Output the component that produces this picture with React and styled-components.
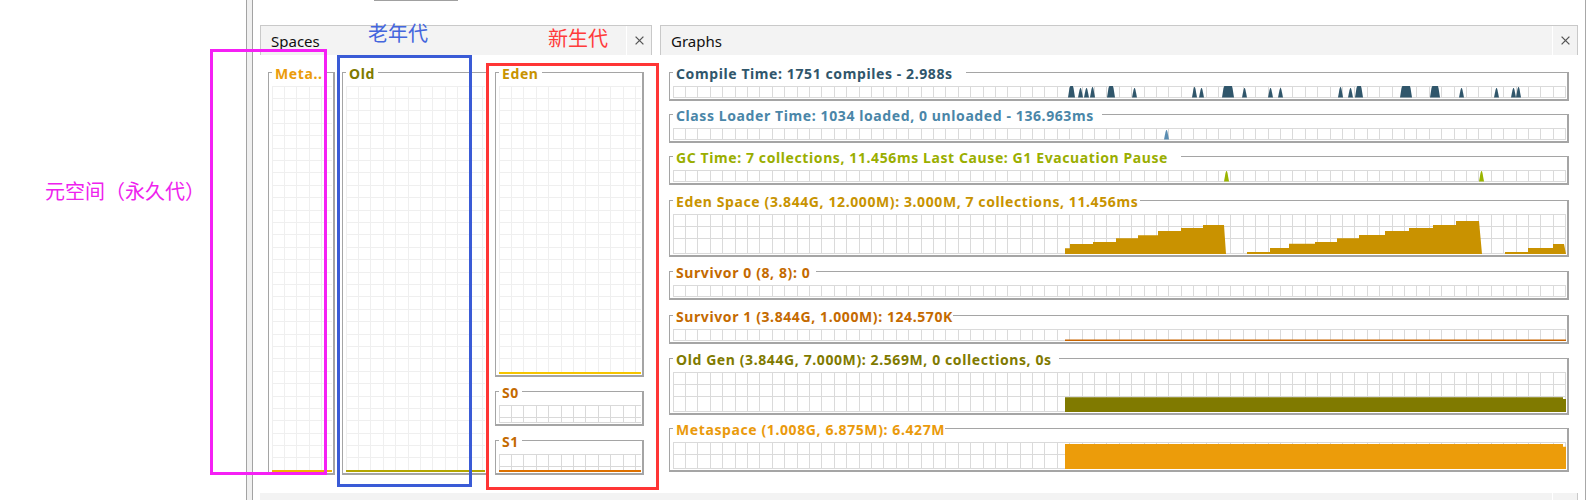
import React from "react";
import styled, { createGlobalStyle } from "styled-components";

const STEP = 12.4;

const GlobalStyle = createGlobalStyle`
  html, body {
    margin: 0;
    padding: 0;
    background: #fff;
  }
  body {
    width: 1590px;
    height: 500px;
    overflow: hidden;
    font-family: "Noto Sans", "Liberation Sans", sans-serif;
  }
`;

const Page = styled.div`
  position: relative;
  display: flex;
  width: 1590px;
  height: 500px;
  overflow: hidden;
  background: #fff;
`;

const Gutter = styled.div`
  flex: none;
  width: 246px;
`;

const Splitter = styled.div`
  flex: none;
  width: 5px;
  border-left: 1px solid #a3a3a3;
  border-right: 1px solid #a3a3a3;
  background: #f0f0f0;
`;

const Main = styled.div`
  flex: none;
  width: 1318px;
  padding: 0 7px;
  border-right: 1px solid #a8a8a8;
  display: flex;
  flex-direction: column;
`;

const TopStub = styled.div`
  flex: none;
  width: 84px;
  height: 1px;
  margin-left: 114px;
  background: #a0a0a0;
`;

const Panels = styled.div`
  flex: none;
  display: flex;
  gap: 8px;
  height: 468px;
  margin-top: 24px;
`;

const Panel = styled.section`
  flex: none;
  width: ${(p) => p.$w}px;
  display: flex;
  flex-direction: column;
`;

const Header = styled.header`
  flex: none;
  box-sizing: border-box;
  height: 30px;
  display: flex;
  background: #f3f3f3;
  border: 1px solid #c9c9c9;
  border-bottom: none;
`;

const TabLabel = styled.div`
  flex: 1;
  display: flex;
  align-items: center;
  padding-left: 10px;
  font-size: 15px;
  color: #111;
`;

const CloseCell = styled.div`
  flex: none;
  width: 24px;
  border-left: 1px solid #fff;
  display: flex;
  align-items: center;
  justify-content: center;
`;

const Body = styled.div`
  flex: 1;
  padding: 17px ${(p) => p.$px}px 0;
`;

const SpaceRow = styled.div`
  display: grid;
  grid-template-columns: 67px 146px 149px;
  column-gap: 7px;
  align-items: start;
`;

const YoungCol = styled.div`
  display: flex;
  flex-direction: column;
  gap: 14px;
`;

const GraphList = styled.div`
  display: flex;
  flex-direction: column;
`;

const Frame = styled.div`
  box-sizing: border-box;
  display: flex;
  flex-direction: column;
  margin-top: ${(p) => p.$space || 0}px;
  border-style: solid;
  border-color: #a5a5a5;
  border-width: 1px 2px 2px 1px;
  padding: 0 1px 1px 3px;
`;

const Legend = styled.div`
  align-self: flex-start;
  height: 16px;
  margin-top: -7px;
  padding: 0 ${(p) => p.$gap}px 0 3px;
  background: #fff;
  font-size: 14px;
  font-weight: 700;
  line-height: 16px;
  letter-spacing: 0.6px;
  white-space: nowrap;
  color: ${(p) => p.$color};
`;

const PlotSvg = styled.svg`
  display: block;
  flex: none;
  margin-top: 4px;
`;

const BottomBar = styled.div`
  flex: 1;
  display: flex;
  justify-content: flex-end;
  background: #f3f3f3;
  border-right: 1px solid #c9c9c9;
`;

const BarCell = styled.div`
  width: 24px;
  border-left: 1px solid #fff;
`;

const Outline = styled.div`
  position: absolute;
  left: ${(p) => p.$x}px;
  top: ${(p) => p.$y}px;
  width: ${(p) => p.$w}px;
  height: ${(p) => p.$h}px;
  box-sizing: border-box;
  border: 3px solid ${(p) => p.$c};
  pointer-events: none;
`;

const Note = styled.div`
  position: absolute;
  left: ${(p) => p.$x}px;
  top: ${(p) => p.$y}px;
  font-family: "Noto Sans CJK SC", "Noto Sans", sans-serif;
  font-size: 20px;
  line-height: 20px;
  white-space: nowrap;
  color: ${(p) => p.$c};
`;

function CloseIcon() {
  return (
    <svg width="9" height="9" viewBox="0 0 9 9">
      <path d="M0.6 0.6L8.4 8.4M8.4 0.6L0.6 8.4" stroke="#555" strokeWidth="1.3" />
    </svg>
  );
}

function Plot({ w, h, grid = "#dadada", children }) {
  const xs = [];
  for (let x = 0; x < w; x += STEP) xs.push(Math.floor(x) + 0.5);
  const ys = [];
  for (let y = 0; y < h - 3; y += STEP) ys.push(Math.floor(y) + 0.5);
  ys.push(h - 0.5);
  return (
    <PlotSvg width={w} height={h}>
      <g shapeRendering="crispEdges" stroke={grid} strokeWidth="1">
        {xs.map((x) => (
          <line key={"v" + x} x1={x} x2={x} y1={0} y2={h} />
        ))}
        {ys.map((y) => (
          <line key={"h" + y} x1={0} x2={w} y1={y} y2={y} />
        ))}
      </g>
      {children}
    </PlotSvg>
  );
}

function Titled({ title, color, gap = 3, space, children }) {
  return (
    <Frame $space={space}>
      <Legend $color={color} $gap={gap}>
        {title}
      </Legend>
      {children}
    </Frame>
  );
}

// spikes: [left, right, top] in plot coordinates
const spikePath = ([a, b, t], bottom) => {
  const l = a + 1.5;
  const r = Math.max(b - 1.5, l + 1);
  return `M${a},${bottom}L${l},${t + 2}L${l + 0.8},${t}L${r - 0.6},${t}L${r},${t + 2}L${b},${bottom}Z`;
};

// steps: [[x, y], ...] drawn as a staircase area
const stepPath = (steps, end, drop, bottom) => {
  let d = `M${steps[0][0]},${bottom}`;
  let prev = bottom;
  steps.forEach(([x, y]) => {
    d += `L${x},${prev}L${x},${y}`;
    prev = y;
  });
  return d + `L${end},${prev}L${drop},${bottom}Z`;
};

const compileSpikes = [
  [395, 402, 0], [405, 410, 2], [411, 416, 2], [417, 422, 1], [434, 442, 0],
  [459, 464, 2], [519, 524, 1], [526, 531, 2], [549, 561, 0], [569, 574, 2],
  [595, 600, 2], [605, 610, 2], [665, 670, 1], [675, 680, 2], [682, 690, 0],
  [727, 739, 0], [757, 767, 0], [786, 791, 2], [821, 826, 2], [838, 843, 2],
  [843, 848, 1],
];

const edenRuns = [
  {
    steps: [[392, 34.3], [397, 30], [420, 28], [443, 24.3], [465, 21.3], [485, 17], [508, 14], [530, 11]],
    end: 551,
    drop: 553,
  },
  {
    steps: [[574, 38], [597, 34], [616, 29.7], [642, 28], [664, 24.3], [686, 21], [712, 17], [736, 14], [760, 11], [783, 7]],
    end: 806,
    drop: 809,
  },
  { steps: [[832, 38], [855, 34], [880, 30]], end: 891, drop: 893 },
];

const GW = 893;

export default function App() {
  return (
    <>
      <GlobalStyle />
      <Page>
        <Gutter />
        <Splitter />
        <Main>
          <TopStub />
          <Panels>
            <Panel $w={392}>
              <Header>
                <TabLabel>Spaces</TabLabel>
                <CloseCell>
                  <CloseIcon />
                </CloseCell>
              </Header>
              <Body $px={8}>
                <SpaceRow>
                  <Titled title="Meta.." color="#eb9c0a">
                    <Plot w={60} h={386} grid="#efefef">
                      <rect x="0" y="384" width="60" height="2" fill="#efb400" />
                    </Plot>
                  </Titled>
                  <Titled title="Old" color="#7f7a00">
                    <Plot w={139} h={386} grid="#efefef">
                      <rect x="0" y="384" width="139" height="2" fill="#b4a600" />
                    </Plot>
                  </Titled>
                  <YoungCol>
                    <Titled title="Eden" color="#c89300">
                      <Plot w={142} h={288} grid="#efefef">
                        <rect x="0" y="286" width="142" height="2" fill="#f6c500" />
                      </Plot>
                    </Titled>
                    <Titled title="S0" color="#c46a00">
                      <Plot w={142} h={18} grid="#d9d9d9" />
                    </Titled>
                    <Titled title="S1" color="#c46a00">
                      <Plot w={142} h={18} grid="#d9d9d9">
                        <rect x="0" y="16" width="142" height="2" fill="#dd7000" />
                      </Plot>
                    </Titled>
                  </YoungCol>
                </SpaceRow>
              </Body>
            </Panel>

            <Panel $w={918}>
              <Header>
                <TabLabel>Graphs</TabLabel>
                <CloseCell>
                  <CloseIcon />
                </CloseCell>
              </Header>
              <Body $px={9}>
                <GraphList>
                  <Titled title="Compile Time: 1751 compiles - 2.988s" color="#30566b" gap={13}>
                    <Plot w={GW} h={12}>
                      {compileSpikes.map((s) => (
                        <path key={s[0]} d={spikePath(s, 11.5)} fill="#30566b" />
                      ))}
                    </Plot>
                  </Titled>
                  <Titled title="Class Loader Time: 1034 loaded, 0 unloaded - 136.963ms" color="#4a86a8" gap={8} space={13}>
                    <Plot w={GW} h={12}>
                      <path d={spikePath([491, 496, 2], 11.5)} fill="#5a8db2" />
                    </Plot>
                  </Titled>
                  <Titled title="GC Time: 7 collections, 11.456ms Last Cause: G1 Evacuation Pause" color="#9aae00" gap={13} space={13}>
                    <Plot w={GW} h={12}>
                      <path d={spikePath([551, 556, 1], 11.5)} fill="#9ab400" />
                      <path d={spikePath([806, 811, 1], 11.5)} fill="#9ab400" />
                    </Plot>
                  </Titled>
                  <Titled title="Eden Space (3.844G, 12.000M): 3.000M, 7 collections, 11.456ms" color="#c89300" gap={2} space={15}>
                    <Plot w={GW} h={40}>
                      {edenRuns.map((r) => (
                        <path key={r.end} d={stepPath(r.steps, r.end, r.drop, 40)} fill="#c99200" />
                      ))}
                    </Plot>
                  </Titled>
                  <Titled title="Survivor 0 (8, 8): 0" color="#c46a00" gap={6} space={14}>
                    <Plot w={GW} h={12} />
                  </Titled>
                  <Titled title="Survivor 1 (3.844G, 1.000M): 124.570K" color="#c46a00" gap={0} space={15}>
                    <Plot w={GW} h={12}>
                      <rect x="392" y="10.5" width="501" height="1.5" fill="#c86400" />
                    </Plot>
                  </Titled>
                  <Titled title="Old Gen (3.844G, 7.000M): 2.569M, 0 collections, 0s" color="#7f7a00" gap={7} space={14}>
                    <Plot w={GW} h={40}>
                      <path d="M392,40V25.3H890V27H893V40Z" fill="#807a00" />
                    </Plot>
                  </Titled>
                  <Titled title="Metaspace (1.008G, 6.875M): 6.427M" color="#ea9a0c" gap={0} space={13}>
                    <Plot w={GW} h={27}>
                      <path d="M392,27V2H890V4.7H893V27Z" fill="#ec9c0a" />
                    </Plot>
                  </Titled>
                </GraphList>
              </Body>
            </Panel>
          </Panels>
          <BottomBar>
            <BarCell />
          </BottomBar>
        </Main>

        <Outline $x={210} $y={49} $w={117} $h={426} $c="#f520f5" />
        <Outline $x={337} $y={55} $w={135} $h={432} $c="#3a5bd6" />
        <Outline $x={486} $y={63} $w={173} $h={427} $c="#ff3535" />
        <Note $x={45} $y={181} $c="#ee22ee">元空间（永久代）</Note>
        <Note $x={368} $y={23} $c="#4466dd">老年代</Note>
        <Note $x={548} $y={28} $c="#ff3b3b">新生代</Note>
      </Page>
    </>
  );
}
